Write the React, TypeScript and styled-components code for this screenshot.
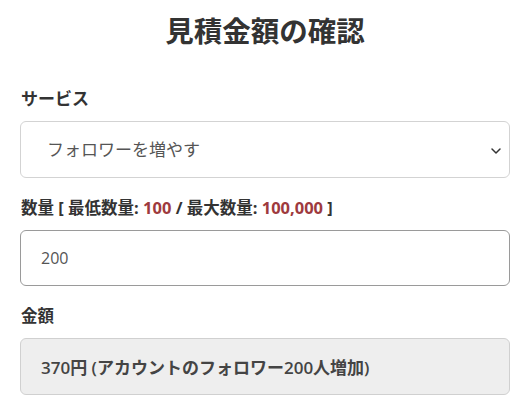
import { createGlobalStyle } from 'styled-components';
import styled from 'styled-components';

const GlobalStyle = createGlobalStyle`
  body {
    margin: 0;
    background: #ffffff;
    font-family: "Open Sans", "Noto Sans CJK JP", sans-serif;
    color: #333333;
  }
`;

const Page = styled.div`
  padding: 15px 20px 0;
`;

const Title = styled.h1`
  margin: 0;
  font-size: 28.5px;
  line-height: 33px;
  font-weight: 700;
  text-align: center;
  color: #333333;
`;

interface LabelProps {
  $first?: boolean;
}

const Label = styled.label<LabelProps>`
  display: block;
  margin: ${({ $first }) => ($first ? '40px' : '19px')} 0 11px;
  padding-left: 1px;
  font-size: ${({ $first }) => ($first ? '17px' : '16.5px')};
  line-height: 22px;
  font-weight: 700;
  color: #333333;
`;

const Limit = styled.span`
  color: #9e3a3e;
`;

const SelectWrap = styled.div`
  position: relative;
`;

const Select = styled.select`
  display: block;
  width: 100%;
  height: 57px;
  box-sizing: border-box;
  padding: 0 40px 0 26px;
  border: 1px solid #d3d3d3;
  border-radius: 6px;
  background: #ffffff;
  appearance: none;
  font-family: inherit;
  font-size: 17px;
  color: #555555;
  outline: none;
`;

const Chevron = styled.svg`
  position: absolute;
  right: 8px;
  top: 50%;
  width: 12px;
  height: 12px;
  margin-top: -5px;
  pointer-events: none;
`;

const Input = styled.input`
  display: block;
  width: 100%;
  height: 56px;
  box-sizing: border-box;
  padding: 0 20px;
  border: 1px solid #9a9a9a;
  border-radius: 6px;
  font-family: inherit;
  font-size: 16px;
  color: #555555;
  outline: none;
`;

const Total = styled.div`
  display: flex;
  align-items: center;
  height: 57px;
  box-sizing: border-box;
  padding: 0 20px;
  border: 1px solid #d0d0d0;
  border-radius: 6px;
  background: #eeeeee;
  font-size: 17px;
  font-weight: 600;
  color: #444444;
`;

export default function App() {
  return (
    <>
      <GlobalStyle />
      <Page>
        <Title>見積金額の確認</Title>

        <Label $first htmlFor="service">
          サービス
        </Label>
        <SelectWrap>
          <Select id="service" defaultValue="follow">
            <option value="follow">フォロワーを増やす</option>
          </Select>
          <Chevron viewBox="0 0 12 12">
            <path
              d="M2 4 L6 8 L10 4"
              fill="none"
              stroke="#333"
              strokeWidth="1.5"
              strokeLinecap="round"
              strokeLinejoin="round"
            />
          </Chevron>
        </SelectWrap>

        <Label htmlFor="quantity">
          数量 [ 最低数量: <Limit>100</Limit> / 最大数量: <Limit>100,000</Limit> ]
        </Label>
        <Input id="quantity" type="text" defaultValue="200" />

        <Label>金額</Label>
        <Total>370円 (アカウントのフォロワー200人増加)</Total>
      </Page>
    </>
  );
}
